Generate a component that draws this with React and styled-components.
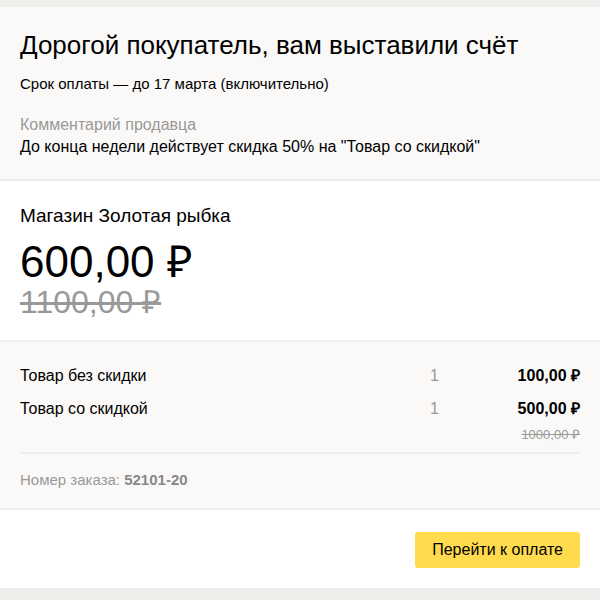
import styled, { createGlobalStyle } from "styled-components";

const GlobalStyle = createGlobalStyle`
	html, body {
		margin: 0;
		padding: 0;
		background: #efeeea;
	}
	body {
		font-family: "Liberation Sans", Arial, sans-serif;
		color: #000;
	}
`;

const items = [
	{ name: "Товар без скидки", qty: 1, price: "100,00 ₽" },
	{ name: "Товар со скидкой", qty: 1, price: "500,00 ₽", old: "1000,00 ₽" },
];

const App = () => {
	return (
		<>
			<GlobalStyle />
			<S.Page>
				<S.Card>
					<S.Header>
						<S.Title>Дорогой покупатель, вам выставили счёт</S.Title>
						<S.Deadline>Срок оплаты — до 17 марта (включительно)</S.Deadline>
						<S.Comment>
							<S.CommentLabel>Комментарий продавца</S.CommentLabel>
							<S.CommentText>
								До конца недели действует скидка 50% на "Товар со скидкой"
							</S.CommentText>
						</S.Comment>
					</S.Header>

					<S.Summary>
						<S.Shop>Магазин Золотая рыбка</S.Shop>
						<S.Total>600,00 ₽</S.Total>
						<S.OldTotal>1100,00 ₽</S.OldTotal>
					</S.Summary>

					<S.Items>
						<S.List>
							{items.map(item => (
								<S.Row key={item.name}>
									<S.Name>{item.name}</S.Name>
									<S.Qty>{item.qty}</S.Qty>
									<S.Price>
										<b>{item.price}</b>
										{item.old && <S.OldPrice>{item.old}</S.OldPrice>}
									</S.Price>
								</S.Row>
							))}
						</S.List>
						<S.Order>
							Номер заказа: <b>52101-20</b>
						</S.Order>
					</S.Items>

					<S.Footer>
						<S.PayButton>Перейти к оплате</S.PayButton>
					</S.Footer>
				</S.Card>
			</S.Page>
		</>
	);
};
export default App;

const Page = styled.div`
	padding: 7px 0 12px;
	background: #efeeea;
`;

const Card = styled.div`
	display: flex;
	flex-direction: column;
`;

const Section = styled.section`
	padding: 0 20px;
	border-bottom: 2px solid #efeeec;
`;

const Header = styled(Section)`
	background: #faf9f8;
	padding-top: 23px;
	padding-bottom: 21px;
`;

const Title = styled.h1`
	margin: 0;
	font-size: 26px;
	font-weight: normal;
	line-height: 30px;
`;

const Deadline = styled.p`
	margin: 14px 0 0;
	font-size: 15px;
	line-height: 20px;
`;

const Comment = styled.div`
	margin-top: 20px;
	font-size: 16px;
	line-height: 22px;
`;

const CommentLabel = styled.div`
	color: #999;
`;

const CommentText = styled.div``;

const Summary = styled(Section)`
	background: #fff;
	padding-top: 23px;
	padding-bottom: 22px;
`;

const Shop = styled.div`
	font-size: 19px;
	line-height: 24px;
`;

const Total = styled.div`
	margin-top: 12px;
	font-size: 44px;
	line-height: 44px;
`;

const OldTotal = styled.div`
	margin-top: 2px;
	font-size: 32px;
	line-height: 32px;
	color: #999;
	text-decoration: line-through;
`;

const Items = styled(Section)`
	background: #faf9f8;
	padding-top: 23px;
	padding-bottom: 19px;
`;

const List = styled.div`
	display: flex;
	flex-direction: column;
	gap: 11px;
	padding-bottom: 9px;
	border-bottom: 2px solid #efeeec;
`;

const Row = styled.div`
	display: grid;
	grid-template-columns: 1fr 30px 120px;
	font-size: 16px;
	line-height: 22px;
`;

const Name = styled.div``;

const Qty = styled.div`
	color: #999;
`;

const Price = styled.div`
	display: flex;
	flex-direction: column;
	align-items: flex-end;
	gap: 7px;
`;

const OldPrice = styled.span`
	font-size: 13px;
	line-height: 16px;
	color: #999;
	text-decoration: line-through;
`;

const Order = styled.div`
	margin-top: 17px;
	font-size: 15px;
	line-height: 18px;
	color: #999;

	b {
		color: #888;
	}
`;

const Footer = styled.div`
	display: flex;
	justify-content: flex-end;
	background: #fff;
	padding: 22px 20px 20px;
`;

const PayButton = styled.button`
	height: 36px;
	padding: 0 17px;
	border: none;
	border-radius: 3px;
	background: #ffdb4d;
	font-family: "Liberation Sans", Arial, sans-serif;
	font-size: 16px;
	color: #000;
	cursor: pointer;
`;

const S = {
	Page,
	Card,
	Header,
	Title,
	Deadline,
	Comment,
	CommentLabel,
	CommentText,
	Summary,
	Shop,
	Total,
	OldTotal,
	Items,
	List,
	Row,
	Name,
	Qty,
	Price,
	OldPrice,
	Order,
	Footer,
	PayButton,
};
